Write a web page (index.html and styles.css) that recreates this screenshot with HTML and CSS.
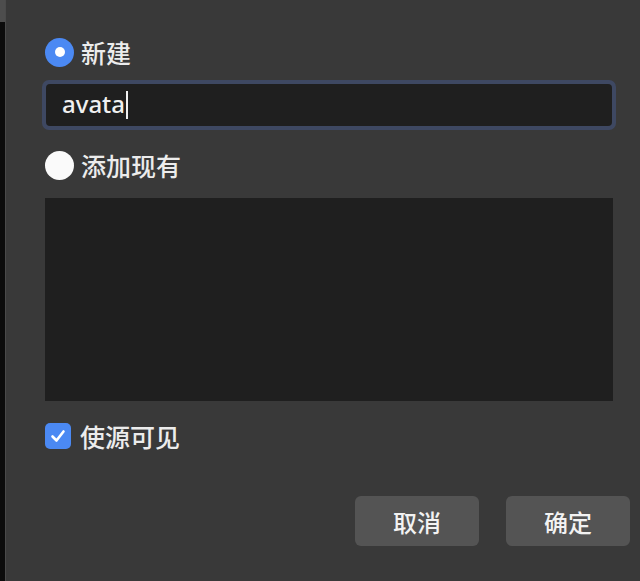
FILE: index.html
```html
<!DOCTYPE html>
<html lang="zh">
<head>
<meta charset="utf-8">
<link rel="stylesheet" href="styles.css">
</head>
<body>
<div class="window">
  <div class="edge"><div class="edge-tab"></div></div>
  <div class="edge-line"></div>
  <div class="panel">
    <div class="form">
      <label class="option first">
        <span class="radio checked"><span class="dot"></span></span>
        <span class="label">新建</span>
      </label>
      <div class="input-ring">
        <div class="input"><span class="value">avata</span><span class="caret"></span></div>
      </div>
      <label class="option second">
        <span class="radio"></span>
        <span class="label">添加现有</span>
      </label>
      <div class="list"></div>
      <label class="check-row">
        <span class="checkbox">
          <svg width="18" height="18" viewBox="0 0 18 18"><path d="M3.5 9.5 L7.5 13.5 L14.5 4.5" fill="none" stroke="#fff" stroke-width="2.6" stroke-linecap="round" stroke-linejoin="round"/></svg>
        </span>
        <span class="label">使源可见</span>
      </label>
    </div>
    <div class="buttons">
      <button class="btn">取消</button>
      <button class="btn">确定</button>
    </div>
  </div>
</div>
</body>
</html>
```
FILE: styles.css
```css
html, body {
  margin: 0;
  padding: 0;
  background: #393939;
  width: 640px;
  height: 581px;
  overflow: hidden;
  font-family: "Noto Sans CJK SC", "Noto Sans", sans-serif;
  color: #ececec;
}
.window {
  display: flex;
  height: 581px;
}
.edge {
  width: 5px;
  background: #0c0c0c;
  flex: none;
}
.edge-tab {
  width: 5px;
  height: 22px;
  background: #4d4d4d;
}
.edge-line {
  width: 1px;
  background: #4a4a4a;
  flex: none;
}
.panel {
  flex: 1;
  display: flex;
  flex-direction: column;
  padding-left: 39px;
}
.form {
  width: 568px;
  display: flex;
  flex-direction: column;
}
.option {
  display: flex;
  align-items: center;
  height: 30px;
  gap: 7px;
}
.option.first { margin-top: 37px; }
.option.second { margin-top: 20px; }
.radio {
  width: 29px;
  height: 29px;
  border-radius: 50%;
  background: #fafafa;
  display: flex;
  align-items: center;
  justify-content: center;
  flex: none;
}
.radio.checked { background: #4b89f3; }
.dot {
  width: 10px;
  height: 10px;
  border-radius: 50%;
  background: #fff;
}
.label {
  font-size: 25px;
  line-height: 30px;
  font-weight: 500;
}
.input-ring {
  margin-top: 13px;
  margin-left: -3px;
  width: 574px;
  padding: 4px;
  box-sizing: border-box;
  background: #3e4862;
  border-radius: 7px;
}
.input {
  height: 42px;
  background: #1f1f1f;
  border-radius: 4px;
  display: flex;
  align-items: center;
  padding-left: 16px;
}
.value {
  font-family: "Noto Sans", sans-serif;
  font-size: 24px;
  line-height: 28px;
  font-weight: 500;
  color: #f0f0f0;
  position: relative;
  top: -1px;
}
.caret {
  width: 1.5px;
  height: 28px;
  background: #f0f0f0;
  margin-left: 1px;
}
.list {
  margin-top: 18px;
  width: 568px;
  height: 203px;
  background: #1f1f1f;
}
.check-row {
  margin-top: 22px;
  display: flex;
  align-items: center;
  gap: 9px;
  height: 26px;
}
.checkbox {
  width: 26px;
  height: 26px;
  border-radius: 5px;
  background: #4b89f3;
  display: flex;
  align-items: center;
  justify-content: center;
  flex: none;
}
.buttons {
  margin-top: 47px;
  display: flex;
  justify-content: flex-end;
  gap: 27px;
  padding-right: 10px;
}
.btn {
  width: 124px;
  height: 50px;
  border: none;
  border-radius: 6px;
  background: #545454;
  color: #f2f2f2;
  font-family: "Noto Sans CJK SC", sans-serif;
  font-size: 24px;
  font-weight: 500;
  padding: 0;
}
```
